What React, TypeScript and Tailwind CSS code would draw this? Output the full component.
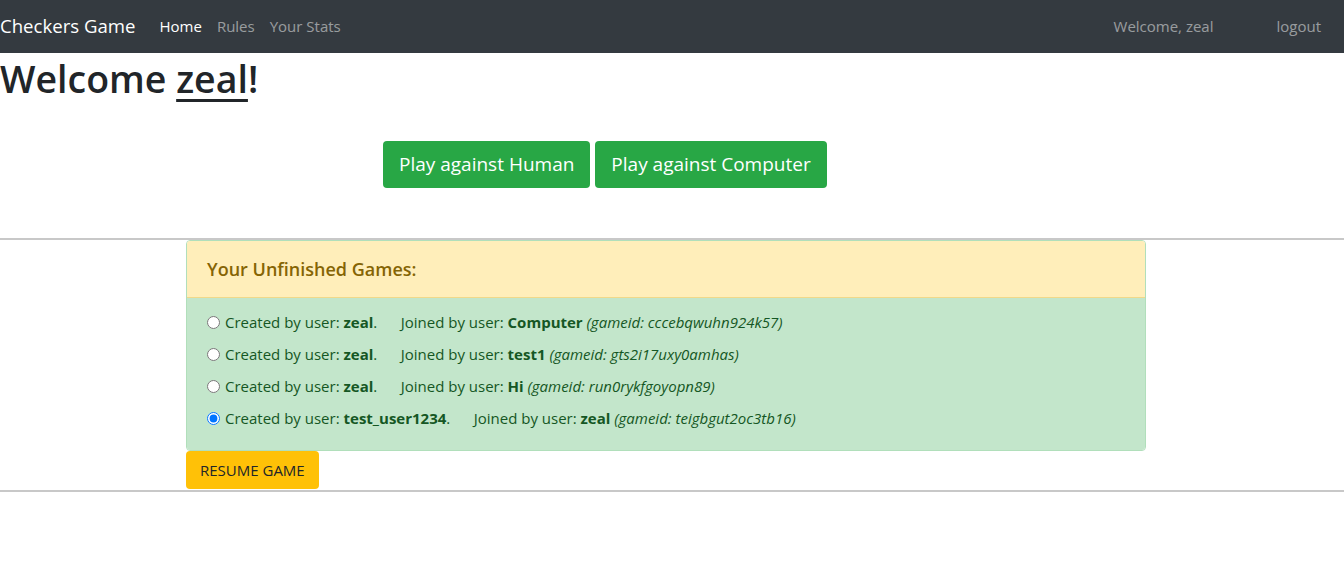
const games = [
  { creator: "zeal", joiner: "Computer", id: "cccebqwuhn924k57", checked: false },
  { creator: "zeal", joiner: "test1", id: "gts2i17uxy0amhas", checked: false },
  { creator: "zeal", joiner: "Hi", id: "run0rykfgoyopn89", checked: false },
  { creator: "test_user1234", joiner: "zeal", id: "teigbgut2oc3tb16", checked: true },
];

const App = () => {
  return (
    <div className="w-full min-h-[561px] bg-white text-[#212529] font-['Segoe_UI','Open_Sans',sans-serif]">
      <nav className="flex items-center h-[53px] bg-[#343a40]">
        <div className="text-[18.6px] text-white -mt-[1px]">Checkers Game</div>
        <div className="flex ml-[24px] text-[15px] gap-[15px]">
          <span className="text-white">Home</span>
          <span className="text-white/50">Rules</span>
          <span className="text-white/50">Your Stats</span>
        </div>
        <div className="flex ml-auto mr-[23px] text-[15px] text-white/50">
          <span className="mr-[63px]">Welcome, zeal</span>
          <span>logout</span>
        </div>
      </nav>

      <h1 className="text-[37.5px] font-semibold leading-[1.2] mt-[3px]">
        Welcome <u className="decoration-[3px] underline-offset-[6px]">zeal</u>!
      </h1>

      <div className="flex gap-[5px] ml-[383px] mt-[40px]">
        <button className="h-[47px] px-[16px] text-[19px] text-white bg-[#28a745] rounded-[4px]">
          Play against Human
        </button>
        <button className="h-[47px] px-[16px] text-[19px] text-white bg-[#28a745] rounded-[4px]">
          Play against Computer
        </button>
      </div>

      <hr className="mt-[50px] border-t-[2px] border-[#c8c8c8]" />

      <div className="ml-[186px] w-[960px]">
        <div className="rounded-[4px] border border-[#b1dfbb] overflow-hidden">
          <div className="h-[57px] flex items-center px-[20px] bg-[#ffeeba] border-b border-[#f0d98a] text-[18px] font-semibold text-[#856404]">
            Your Unfinished Games:
          </div>
          <div className="bg-[#c3e6cb] text-[#155724] text-[15px] px-[20px] pt-[8px] pb-[16px]">
            {games.map((g) => (
              <div key={g.id} className="flex items-center h-[32px]">
                <input
                  type="radio"
                  name="game"
                  defaultChecked={g.checked}
                  className="w-[13px] h-[13px] mr-[5px] accent-[#0075ff]"
                />
                <span className="whitespace-pre">
                  Created by user: <b>{g.creator}</b>.{"      "}Joined by user: <b>{g.joiner}</b>{" "}
                  <i>(gameid: {g.id})</i>
                </span>
              </div>
            ))}
          </div>
        </div>
        <button className="h-[38px] px-[14px] bg-[#ffc107] text-[15px] text-[#212529] rounded-[4px]">
          RESUME GAME
        </button>
      </div>

      <hr className="mt-[1px] border-t-[2px] border-[#c8c8c8]" />
    </div>
  );
};

export default App;
